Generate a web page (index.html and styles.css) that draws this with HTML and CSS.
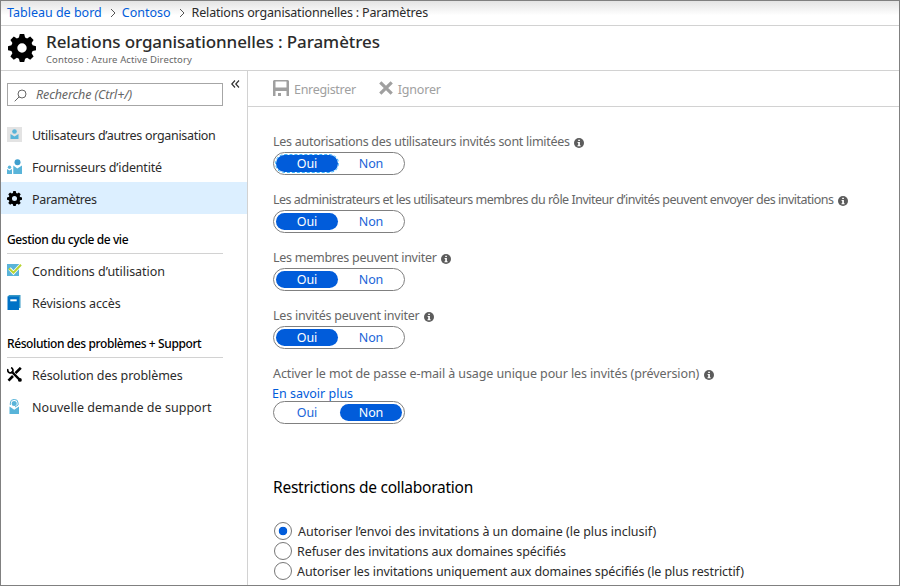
FILE: index.html
```html
<!DOCTYPE html>
<html lang="fr">
<head>
<meta charset="utf-8">
<title>Relations organisationnelles : Paramètres</title>
<link rel="stylesheet" href="styles.css">
</head>
<body>
<svg width="0" height="0" class="defs">
  <symbol id="gear" viewBox="0 0 28 28">
    <path fill-rule="evenodd" d="M11.800 0h4.400l.9 3.600 2 1 3.100-2 3.400 3.400-2 3.100 1 2.200 3.400.9v4.000l-3.400.9-1 2.200 2 3.100-3.400 3.400-3.100-2-2 1-.9 3.200h-4.400l-.9-3.200-2-1-3.100 2-3.400-3.400 2-3.100-1-2.200-3.400-.9v-4.000l3.400-.9 1-2.200-2-3.100 3.400-3.400 3.100 2 2-1zM14 9.300a4.700 4.700 0 1 0 0 9.400a4.700 4.700 0 1 0 0-9.400z"/>
  </symbol>
  <symbol id="info" viewBox="0 0 10 10">
    <circle cx="5" cy="5" r="5" fill="#5c5c5c"/>
    <path d="M4.200 1.700h1.700v1.400H4.200zM3.600 4h2.300v3.300h.7v.9H3.500v-.9h.7V4.900h-.6z" fill="#fff"/>
  </symbol>
</svg>
<div class="window">
  <nav class="breadcrumb">
    <a class="t bc1">Tableau de bord</a>
    <svg class="chev" viewBox="0 0 6 8"><path d="M1 0l4 4-4 4"/></svg>
    <a class="t bc2">Contoso</a>
    <svg class="chev" viewBox="0 0 6 8"><path d="M1 0l4 4-4 4"/></svg>
    <span class="t bc3">Relations organisationnelles : Paramètres</span>
  </nav>
  <header class="header">
    <svg class="header-icon"><use href="#gear"/></svg>
    <div>
      <h1><span class="t title">Relations organisationnelles : Paramètres</span></h1>
      <p><span class="t sub">Contoso : Azure Active Directory</span></p>
    </div>
  </header>
  <div class="body">
    <aside class="sidebar">
      <div class="search-row">
        <div class="search">
          <svg class="lens" viewBox="0 0 13 13"><circle cx="8" cy="5" r="4"/><path d="M5.200 7.800L.7 12.300"/></svg>
          <span class="t ph">Recherche (Ctrl+/)</span>
        </div>
        <svg class="collapse" viewBox="0 0 9 8"><path d="M4 .5L.8 4 4 7.500M8 .5L4.800 4 8 7.500"/></svg>
      </div>
      <ul class="menu first">
        <li><svg class="ico" viewBox="0 0 15 15"><path fill="#e3e3e3" d="M0 0h15v15H0z"/><path fill="#59b4d9" d="M3.500 7l4 2.500L11.500 7v5h-8z"/><circle cx="7.500" cy="4.500" r="2.300" fill="#59b4d9"/></svg><span class="t m1">Utilisateurs d’autres organisation</span></li>
        <li><svg class="ico" viewBox="0 0 15 15"><path fill="#59b4d9" d="M6.300 6.500l4 3 4.700-3V15H6.300zM0 10l2.500 1.500L5 10v5H0z"/><circle cx="10.500" cy="3.200" r="3" fill="#3f9fce"/><circle cx="2.500" cy="8.300" r="1.700" fill="#59b4d9"/></svg><span class="t m2">Fournisseurs d’identité</span></li>
        <li class="selected"><svg class="ico"><use href="#gear"/></svg><span class="t m3">Paramètres</span></li>
      </ul>
      <h2><span class="t g1">Gestion du cycle de vie</span></h2>
      <ul class="menu">
        <li><svg class="ico" viewBox="0 0 15 15"><path fill="#59b4d9" d="M0 1h12v12H0z"/><path d="M2.500 5.500l4 4.200L14 1.700" fill="none" stroke="#fff" stroke-width="3.400"/><path d="M2 5.500l4.500 4.200L14 1.700" fill="none" stroke="#b8d432" stroke-width="2"/></svg><span class="t m4">Conditions d’utilisation</span></li>
        <li><svg class="ico" viewBox="0 0 15 15"><path fill="#3999c6" d="M2 0h11.500v13H12V2H.500z"/><path fill="#0072c6" d="M.5 1.500H12V15H.5z"/><path fill="#fff" d="M3.300 4.300h6.400v2H3.300z"/></svg><span class="t m5">Révisions accès</span></li>
      </ul>
      <h2 class="support"><span class="t g2">Résolution des problèmes + Support</span></h2>
      <ul class="menu">
        <li><svg class="ico" viewBox="0 0 15 15"><path d="M13.800.800L8.500 6.200M6 9l-4.500 4.700" stroke="#000" stroke-width="2.600"/><path d="M4.500 4.500l8.300 8.300" stroke="#000" stroke-width="2.400"/><path d="M1 2.200a2.600 2.600 0 1 0 3-1.400" fill="none" stroke="#000" stroke-width="1.700"/><circle cx="12.900" cy="12.900" r="1.900"/></svg><span class="t m6">Résolution des problèmes</span></li>
        <li><svg class="ico" viewBox="0 0 15 15"><path fill="#59b4d9" d="M2.500 7.500l4.700 3.300L12 7.500V15H2.500z"/><circle cx="7.200" cy="4.500" r="2.500" fill="#59b4d9"/><path d="M3.300 6V4a3.900 3.600 0 0 1 7.800 0v2L8 8" fill="none" stroke="#59b4d9"/></svg><span class="t m7">Nouvelle demande de support</span></li>
      </ul>
    </aside>
    <main class="main">
      <div class="toolbar">
        <svg class="save" viewBox="0 0 16 16"><path fill-rule="evenodd" d="M1 0h14l1 1v15h-2.500v-5h-11v5H0V1zM2.500 1.500v6h11v-6zM5 13h3v3H5z"/></svg>
        <span class="t tb1">Enregistrer</span>
        <svg class="cross" viewBox="0 0 14 14"><path d="M1.300 1.300l11.400 11.400M12.700 1.300L1.300 12.700"/></svg>
        <span class="t tb2">Ignorer</span>
      </div>
      <div class="content">
        <section class="setting">
          <div class="label"><span class="t l1">Les autorisations des utilisateurs invités sont limitées</span><svg class="info"><use href="#info"/></svg></div>
          <div class="toggle"><span class="on focused">Oui</span><span>Non</span></div>
        </section>
        <section class="setting">
          <div class="label"><span class="t l2">Les administrateurs et les utilisateurs membres du rôle Inviteur d’invités peuvent envoyer des invitations</span><svg class="info"><use href="#info"/></svg></div>
          <div class="toggle"><span class="on">Oui</span><span>Non</span></div>
        </section>
        <section class="setting">
          <div class="label"><span class="t l3">Les membres peuvent inviter</span><svg class="info"><use href="#info"/></svg></div>
          <div class="toggle"><span class="on">Oui</span><span>Non</span></div>
        </section>
        <section class="setting">
          <div class="label"><span class="t l4">Les invités peuvent inviter</span><svg class="info"><use href="#info"/></svg></div>
          <div class="toggle"><span class="on">Oui</span><span>Non</span></div>
        </section>
        <section class="setting">
          <div class="label"><span class="t l5">Activer le mot de passe e-mail à usage unique pour les invités (préversion)</span><svg class="info"><use href="#info"/></svg></div>
          <a class="more">En savoir plus</a>
          <div class="toggle"><span>Oui</span><span class="on">Non</span></div>
        </section>
        <h3><span class="t h3">Restrictions de collaboration</span></h3>
        <div class="radios">
          <label><i class="radio checked"></i><span class="t r1">Autoriser l’envoi des invitations à un domaine (le plus inclusif)</span></label>
          <label><i class="radio"></i><span class="t r2">Refuser des invitations aux domaines spécifiés</span></label>
          <label><i class="radio"></i><span class="t r3">Autoriser les invitations uniquement aux domaines spécifiés (le plus restrictif)</span></label>
        </div>
      </div>
    </main>
  </div>
</div>
</body>
</html>
```
FILE: styles.css
```css
* { box-sizing: border-box; margin: 0; padding: 0; }
body { width: 900px; height: 586px; overflow: hidden; background: #fff; color: #2b2b2b; font: 12.5px/20px "Noto Sans", "Open Sans", sans-serif; }
.defs { position: absolute; }
.window { display: flex; flex-direction: column; width: 900px; height: 586px; border: 1px solid #808080; }
.t { white-space: nowrap; }

/* Tracking per text */
.bc3 { letter-spacing: -.17px; }
.title { letter-spacing: -.095px; }
.sub { letter-spacing: .1px; }
.ph { letter-spacing: -.122px; }
.m1 { letter-spacing: -.313px; }
.m2 { letter-spacing: -.17px; }
.m3 { letter-spacing: -.29px; }
.m4 { letter-spacing: -.034px; }
.m5 { letter-spacing: -.09px; }
.m6 { letter-spacing: -.07px; }
.m7 { letter-spacing: .04px; }
.g1 { letter-spacing: -.41px; }
.g2 { letter-spacing: -.4px; }
.tb1 { letter-spacing: -.31px; }
.tb2 { letter-spacing: -.192px; }
.l1 { letter-spacing: -.275px; }
.l2 { letter-spacing: -.5px; }
.l3 { letter-spacing: -.265px; }
.l4 { letter-spacing: -.235px; }
.l5 { letter-spacing: -.105px; }
.h3 { letter-spacing: -.253px; }
.r1 { letter-spacing: -.04px; margin-left: 1px; }
.r2 { letter-spacing: -.085px; }
.r3 { letter-spacing: -.097px; }

.breadcrumb { display: flex; align-items: center; height: 25px; padding: 0 6px 1px; border-bottom: 1px solid #d2d2d2; background: linear-gradient(#e4e4e4, #fff 60%); }
.breadcrumb a, .more { color: #015cda; }
.chev { width: 6px; height: 8px; margin: 0 7px 0 8px; fill: none; stroke: #555; }
.bc2 { margin-left: -1px; }
.header { display: flex; height: 45px; padding-left: 7px; border-bottom: 1px solid #d2d2d2; }
.header-icon { width: 28px; height: 28px; margin: 8px 10px 0 0; }
.header h1 { font-size: 17px; line-height: 24px; font-weight: 500; margin-top: 4px; }
.header p { font-size: 9.500px; line-height: 12px; color: #666; }
.body { display: flex; flex: 1; }
.sidebar { flex: none; width: 247px; border-right: 1px solid #d2d2d2; }
.search-row { display: flex; height: 47px; padding: 12px 0 0 6px; }
.search { display: flex; align-items: center; width: 216px; height: 23px; border: 1px solid #a6a6a6; color: #666; font-style: italic; }
.lens { width: 13px; height: 13px; margin: 2px 9px 0 6px; fill: none; stroke: #666; }
.collapse { width: 9px; height: 8px; margin: -3px 0 0 8px; fill: none; stroke: #333; stroke-width: 1.2; }
.menu { list-style: none; }
.menu li { display: flex; align-items: center; height: 32px; padding: 2px 0 0 6px; }
.menu.first li { padding-top: 3px; }
.menu .selected { background: #dcefff; }
.ico { width: 15px; height: 15px; margin: -3px 10px 0 0; }
.sidebar h2 { width: 216px; height: 40px; margin: 0 0 1px 6px; padding-top: 16px; border-bottom: 1px solid #d2d2d2; color: #000; font-size: 12px; font-weight: 500; }
.sidebar .support { height: 39px; padding-top: 15px; }
.main { flex: 1; }
.toolbar { display: flex; align-items: center; height: 36px; padding-left: 25px; border-bottom: 1px solid #d2d2d2; color: #a0a0a0; }
.toolbar .t { margin-top: 2px; }
.save { width: 16px; height: 16px; margin: -2px 5px 0 0; fill: #a0a0a0; }
.cross { width: 14px; height: 14px; margin: -2px 5px 0 23px; stroke: #a0a0a0; stroke-width: 3.2; }
.content { padding: 25px 0 0 25px; }
.setting { margin-bottom: 15px; }
.label { display: flex; align-items: center; height: 20px; color: #666; }
.info { width: 10px; height: 10px; margin: 1px 0 0 4.500px; }
.toggle { display: flex; gap: 2px; width: 132px; height: 23px; padding: 2px; border: 1px solid #808080; border-radius: 12px; color: #2064d8; }
.toggle span { width: 62px; height: 17px; border-radius: 9px; text-align: center; line-height: 17px; letter-spacing: -.1px; }
.toggle .on { background: #015cda; color: #fff; }
.toggle .focused { outline: 1px dashed #3db8ff; }
.more { display: block; height: 17px; margin-left: -1px; line-height: 19px; }
.content h3 { margin-top: 51px; color: #000; font-size: 15.500px; line-height: 24px; font-weight: 400; }
.radios { margin-top: 23px; }
.radios label { display: flex; align-items: center; height: 20px; }
.radio { width: 18px; height: 18px; margin: -2px 5px 0 1px; border: 1px solid #777; border-radius: 50%; }
.radio.checked { background: radial-gradient(circle, #015cda 4px, #fff 4.600px); }
```
